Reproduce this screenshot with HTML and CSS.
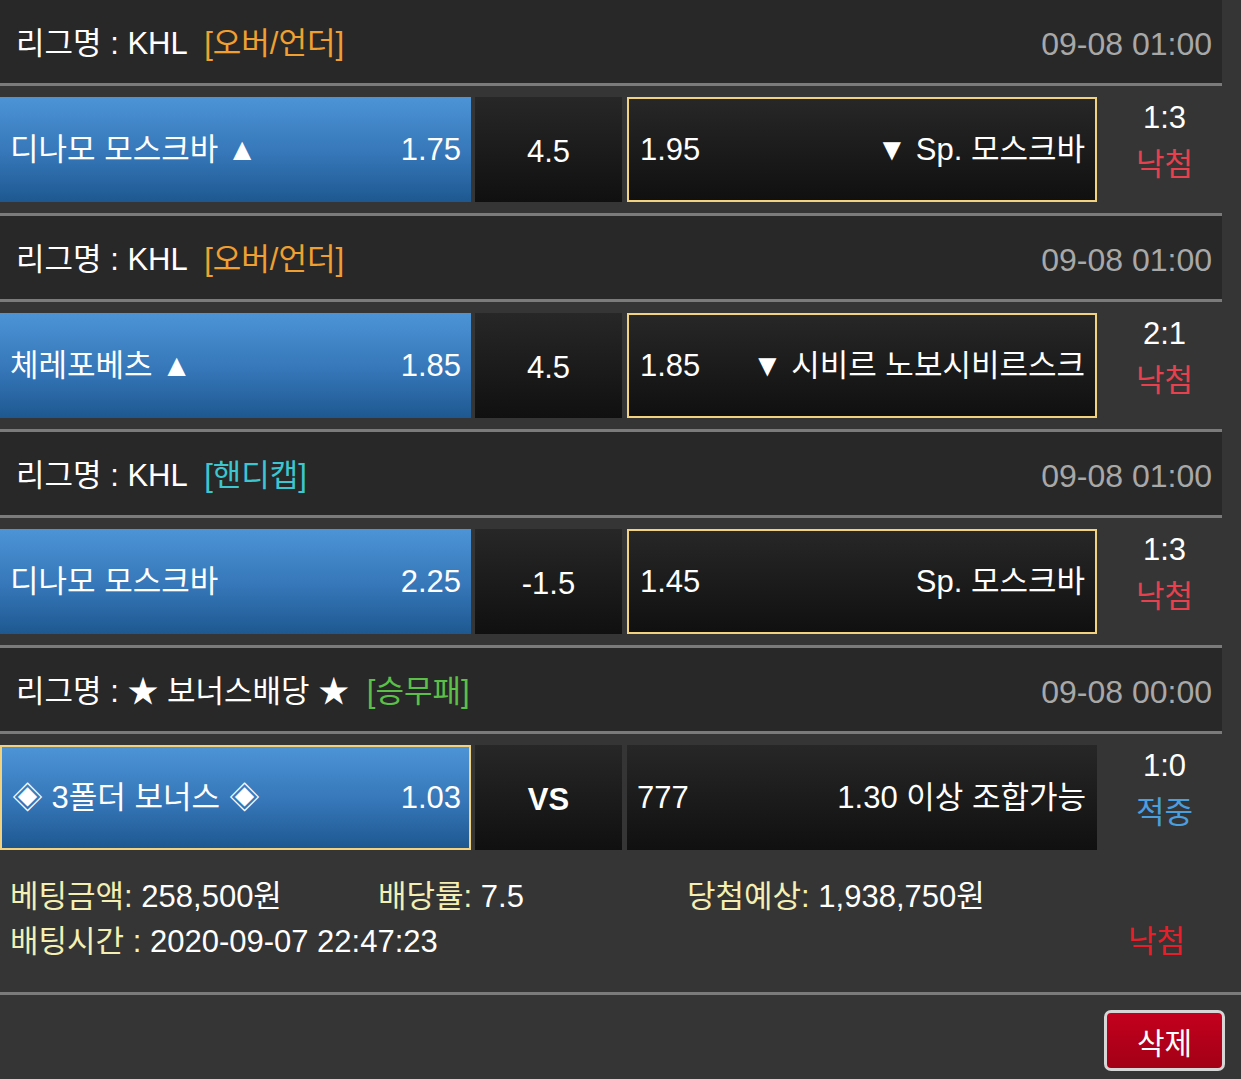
FILE: index.html
```html
<!DOCTYPE html>
<html lang="ko">
<head>
    <meta charset="UTF-8">
    <meta name="viewport" content="width=device-width, initial-scale=1.0">
    <title>배팅내역</title>
    <link rel="stylesheet" href="styles.css">
</head>
<body>
    <div class="slip">
        <div class="game">
            <div class="league">
                <div class="league-name">리그명 : KHL <span class="type type-ou">[오버/언더]</span></div>
                <div class="game-time">09-08 01:00</div>
            </div>
            <div class="match">
                <div class="pick home"><span>디나모 모스크바 ▲</span><span>1.75</span></div>
                <div class="pick line">4.5</div>
                <div class="pick away selected"><span>1.95</span><span>▼ Sp. 모스크바</span></div>
                <div class="result"><div>1:3</div><div class="lose">낙첨</div></div>
            </div>
        </div>

        <div class="game">
            <div class="league">
                <div class="league-name">리그명 : KHL <span class="type type-ou">[오버/언더]</span></div>
                <div class="game-time">09-08 01:00</div>
            </div>
            <div class="match">
                <div class="pick home"><span>체레포베츠 ▲</span><span>1.85</span></div>
                <div class="pick line">4.5</div>
                <div class="pick away selected"><span>1.85</span><span>▼ 시비르 노보시비르스크</span></div>
                <div class="result"><div>2:1</div><div class="lose">낙첨</div></div>
            </div>
        </div>

        <div class="game">
            <div class="league">
                <div class="league-name">리그명 : KHL <span class="type type-hc">[핸디캡]</span></div>
                <div class="game-time">09-08 01:00</div>
            </div>
            <div class="match">
                <div class="pick home"><span>디나모 모스크바</span><span>2.25</span></div>
                <div class="pick line">-1.5</div>
                <div class="pick away selected"><span>1.45</span><span>Sp. 모스크바</span></div>
                <div class="result"><div>1:3</div><div class="lose">낙첨</div></div>
            </div>
        </div>

        <div class="game last">
            <div class="league">
                <div class="league-name">리그명 : ★ 보너스배당 ★ <span class="type type-wdl">[승무패]</span></div>
                <div class="game-time">09-08 00:00</div>
            </div>
            <div class="match">
                <div class="pick home selected"><span>◈ 3폴더 보너스 ◈</span><span>1.03</span></div>
                <div class="pick line vs">VS</div>
                <div class="pick away"><span>777</span><span>1.30 이상 조합가능</span></div>
                <div class="result"><div>1:0</div><div class="win">적중</div></div>
            </div>
        </div>
    </div>

    <div class="bet-info">
        <div class="info-row">
            <div class="info-col amount"><span class="label">베팅금액:</span> 258,500원</div>
            <div class="info-col rate"><span class="label">배당률:</span> 7.5</div>
            <div class="info-col"><span class="label">당첨예상:</span> 1,938,750원</div>
        </div>
        <div class="info-row spread">
            <div><span class="label">배팅시간 :</span> 2020-09-07 22:47:23</div>
            <div class="status-lose">낙첨</div>
        </div>
    </div>

    <div class="actions">
        <button type="button" class="delete">삭제</button>
    </div>
</body>
</html>
```

FILE: styles.css
```css
body {
    margin: 0;
    background-color: #353535;
    color: #fff;
    font-family: "Liberation Sans", "Noto Sans CJK KR", sans-serif;
    font-size: 31px;
    line-height: 1.2;
}
.slip {
    width: 1222px;
}
.league {
    display: flex;
    justify-content: space-between;
    align-items: center;
    height: 78px;
    padding: 5px 10px 0 16px;
    background-color: #282828;
    border-bottom: 3px solid #7b7b7b;
}
.type {
    margin-left: 9px;
}
.type-ou {
    color: #f0a030;
}
.type-hc {
    color: #3cc6d0;
}
.type-wdl {
    color: #5cbf48;
}
.game-time {
    color: #a8a8a8;
    font-size: 32px;
}
.match {
    display: flex;
    padding: 11px 0;
    border-bottom: 3px solid #7b7b7b;
}
.game.last .match {
    border-bottom: none;
    padding-bottom: 10px;
}
.pick {
    display: flex;
    align-items: center;
    justify-content: space-between;
    height: 105px;
    box-sizing: border-box;
    background: linear-gradient(#272727, #101010);
}
.pick.home {
    width: 471px;
    padding: 0 10px;
    background: linear-gradient(#4c94d6, #3576b8 55%, #1e5890);
}
.pick.line {
    width: 147px;
    margin-left: 4px;
    justify-content: center;
    padding-top: 5px;
}
.pick.vs {
    font-weight: bold;
}
.pick.away {
    width: 470px;
    margin-left: 5px;
    padding: 0 11px 0 10px;
}
.pick.selected {
    border: 2px solid #f2d27e;
}
.pick.away.selected {
    padding: 0 10px 0 11px;
}
.pick.home.selected {
    padding: 0 8px 0 10px;
}
.result {
    flex: 1;
    text-align: center;
    padding-left: 10px;
    margin-top: -3px;
    line-height: 47px;
}
.lose {
    color: #e8404c;
}
.win {
    color: #4a9fe0;
}
.bet-info {
    padding: 14px 56px 28px 10px;
    border-bottom: 3px solid #7b7b7b;
    line-height: 45px;
}
.info-row {
    display: flex;
}
.info-row.spread {
    justify-content: space-between;
}
.info-col.amount {
    width: 368px;
}
.info-col.rate {
    width: 309px;
}
.label {
    color: #f4efb2;
}
.status-lose {
    color: #e6202a;
}
.actions {
    display: flex;
    justify-content: flex-end;
    padding: 15px 16px 0 0;
}
button.delete {
    width: 121px;
    height: 61px;
    border: 3px solid #d6d6d6;
    border-radius: 7px;
    background: linear-gradient(#c4001e, #a20016);
    color: #fff;
    font-family: inherit;
    font-size: 30px;
    cursor: pointer;
}
```
